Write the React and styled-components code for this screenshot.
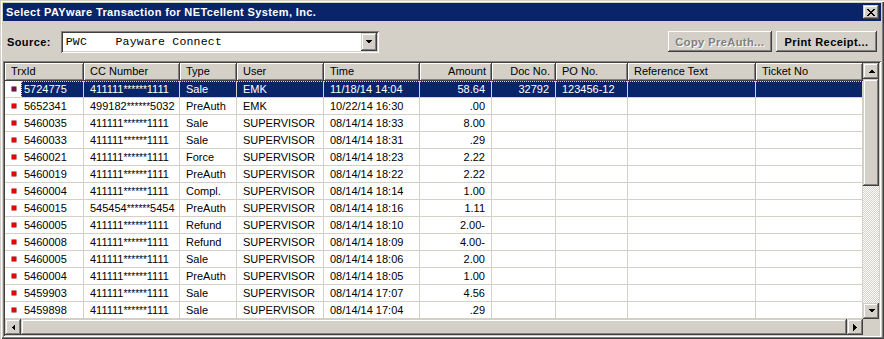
import React from 'react';
import styled, { createGlobalStyle } from 'styled-components';

const FACE = '#d4d0c8';
const NAVY = '#0a246a';

const GlobalStyle = createGlobalStyle`
  html, body {
    margin: 0;
    padding: 0;
    background: ${FACE};
  }
  body {
    font-family: "Liberation Sans", Arial, sans-serif;
    font-size: 11px;
    color: #000;
  }
  * {
    box-sizing: border-box;
  }
`;

const raised = `inset -1px -1px #404040, inset 1px 1px #ffffff, inset -2px -2px #808080, inset 2px 2px ${FACE}`;
const raisedScroll = `inset -1px -1px #404040, inset 1px 1px ${FACE}, inset -2px -2px #808080, inset 2px 2px #ffffff`;
const sunken = `inset 1px 1px #808080, inset -1px -1px #ffffff, inset 2px 2px #404040, inset -2px -2px ${FACE}`;

const Window = styled.div`
  width: 884px;
  height: 339px;
  padding: 3px 3px 2px 3px;
  display: flex;
  flex-direction: column;
  background: ${FACE};
  box-shadow: inset 1px 1px ${FACE}, inset 2px 2px #ffffff, inset -1px -1px #404040,
    inset -2px -2px #808080;
`;

const TitleBar = styled.div`
  height: 18px;
  background: ${NAVY};
  display: flex;
  align-items: center;
  padding: 0 2px 0 3px;
`;

const Title = styled.div`
  color: #fff;
  font-weight: bold;
  font-size: 11px;
  letter-spacing: 0.37px;
  white-space: nowrap;
`;

const CloseButton = styled.div`
  margin-left: auto;
  width: 16px;
  height: 14px;
  background: ${FACE};
  box-shadow: ${raisedScroll};
  display: flex;
  align-items: center;
  justify-content: center;
`;

const Toolbar = styled.div`
  height: 40px;
  display: flex;
  align-items: center;
  padding: 1px 4px 0 4px;
`;

const Label = styled.span`
  font-weight: bold;
  letter-spacing: 0.4px;
  margin-right: 10px;
`;

const Combo = styled.div`
  width: 318px;
  height: 22px;
  background: #fff;
  box-shadow: ${sunken};
  padding: 2px;
  display: flex;
  align-items: center;
`;

const ComboText = styled.div`
  flex: 1;
  font-family: "Liberation Mono", "Courier New", monospace;
  font-size: 11.5px;
  letter-spacing: 0.2px;
  white-space: pre;
  padding-left: 3px;
`;

const DropButton = styled.div`
  width: 16px;
  height: 18px;
  background: ${FACE};
  box-shadow: ${raisedScroll};
  display: flex;
  align-items: center;
  justify-content: center;
`;

const Buttons = styled.div`
  margin-left: auto;
  display: flex;
  gap: 4px;
`;

const Button = styled.div`
  width: ${p => p.$width}px;
  height: 21px;
  background: ${FACE};
  box-shadow: ${raised};
  font-weight: bold;
  letter-spacing: 0.45px;
  display: flex;
  align-items: center;
  justify-content: center;
  color: ${p => (p.$disabled ? '#808080' : '#000')};
  text-shadow: ${p => (p.$disabled ? '1px 1px #ffffff' : 'none')};
`;

const ListFrame = styled.div`
  flex: 1;
  padding: 2px;
  box-shadow: ${sunken};
  display: grid;
  grid-template-columns: 1fr 16px;
  grid-template-rows: 1fr 16px;
  min-height: 0;
`;

const ListMain = styled.div`
  background: #fff;
  overflow: hidden;
`;

const COLS = '79px 96px 57px 87px 96px 72px 64px 72px 128px 1fr';

const HeaderRow = styled.div`
  display: grid;
  grid-template-columns: ${COLS};
  height: 18px;
`;

const HeaderCell = styled.div`
  background: ${FACE};
  box-shadow: inset -1px -1px #404040, inset 1px 1px #ffffff, inset -2px -2px #808080;
  padding: 0 6px;
  line-height: 17px;
  text-align: ${p => p.$align || 'left'};
  white-space: nowrap;
  overflow: hidden;
`;

const Row = styled.div`
  display: grid;
  grid-template-columns: ${COLS};
  height: 17px;
  border-bottom: 1px solid ${FACE};
`;

const focusLine = `repeating-linear-gradient(90deg, #e8d890 0 1px, transparent 1px 2px)`;

const Cell = styled.div`
  border-right: 1px solid ${FACE};
  padding: 0 6px;
  line-height: 16px;
  white-space: nowrap;
  overflow: hidden;
  text-align: ${p => p.$align || 'left'};
  background-color: ${p => (p.$selected ? NAVY : 'transparent')};
  background-image: ${p => (p.$selected ? focusLine : 'none')};
  background-size: 100% 1px;
  background-repeat: no-repeat;
  color: ${p => (p.$selected ? '#fff' : '#000')};
`;

const IdCell = styled.div`
  border-right: 1px solid ${FACE};
  display: flex;
  align-items: center;
  padding-left: 7px;
  white-space: nowrap;
  overflow: hidden;
`;

const RowIcon = styled.span`
  width: 4px;
  height: 4px;
  flex: none;
  background: ${p => (p.$selected ? '#7a1040' : '#ee0000')};
  box-shadow: 0 0 0 0.5px ${p => (p.$selected ? '#3a0830' : '#a00000')};
  margin-right: 6px;
`;

const IdLabel = styled.span`
  flex: 1;
  align-self: stretch;
  line-height: 16px;
  padding-left: 2px;
  background-color: ${p => (p.$selected ? NAVY : 'transparent')};
  background-image: ${p => (p.$selected ? focusLine : 'none')};
  background-size: 100% 1px;
  background-repeat: no-repeat;
  color: ${p => (p.$selected ? '#fff' : '#000')};
  border-left: ${p => (p.$selected ? '1px dotted #e8d890' : 'none')};
  margin-left: ${p => (p.$selected ? '-1px' : '0')};
`;

const Stars = styled.span`
  font-size: 10px;
`;

const VScroll = styled.div`
  display: flex;
  flex-direction: column;
  background: repeating-conic-gradient(${FACE} 0 25%, #ffffff 0 50%) 0 0 / 2px 2px;
`;

const HScroll = styled.div`
  display: flex;
  background: ${FACE};
`;

const ScrollButton = styled.div`
  width: 16px;
  height: 16px;
  flex: none;
  background: ${FACE};
  box-shadow: ${raisedScroll};
  display: flex;
  align-items: center;
  justify-content: center;
`;

const Thumb = styled.div`
  background: ${FACE};
  box-shadow: ${raisedScroll};
  flex: ${p => (p.$size ? 'none' : '1')};
  height: ${p => (p.$size ? `${p.$size}px` : 'auto')};
`;

const Track = styled.div`
  flex: 1;
`;

const Corner = styled.div`
  background: ${FACE};
`;

const Arrow = ({ dir }) => {
  const pts = {
    up: '0,4 7,4 3.5,0.5',
    down: '0,0 7,0 3.5,3.5',
    left: '4,0 4,7 0.5,3.5',
    right: '0,0 0,7 3.5,3.5',
  }[dir];
  const vertical = dir === 'up' || dir === 'down';
  return (
    <svg width={vertical ? 7 : 4} height={vertical ? 4 : 7} viewBox={vertical ? '0 0 7 4' : '0 0 4 7'}>
      <polygon points={pts} fill="#000" shapeRendering="crispEdges" />
    </svg>
  );
};

const CloseGlyph = () => (
  <svg width="8" height="7" viewBox="0 0 8 7">
    <path d="M0 0h2l2 2.5L6 0h2L5 3.5 8 7H6L4 4.5 2 7H0l3-3.5z" fill="#000" shapeRendering="crispEdges" />
  </svg>
);

const columns = [
  { key: 'id', title: 'TrxId' },
  { key: 'cc', title: 'CC Number' },
  { key: 'type', title: 'Type' },
  { key: 'user', title: 'User' },
  { key: 'time', title: 'Time' },
  { key: 'amount', title: 'Amount', align: 'right' },
  { key: 'doc', title: 'Doc No.', align: 'right' },
  { key: 'po', title: 'PO No.' },
  { key: 'ref', title: 'Reference Text' },
  { key: 'ticket', title: 'Ticket No' },
];

const rows = [
  ['5724775', ['411111', '1111'], 'Sale', 'EMK', '11/18/14 14:04', '58.64', '32792', '123456-12'],
  ['5652341', ['499182', '5032'], 'PreAuth', 'EMK', '10/22/14 16:30', '.00'],
  ['5460035', ['411111', '1111'], 'Sale', 'SUPERVISOR', '08/14/14 18:33', '8.00'],
  ['5460033', ['411111', '1111'], 'Sale', 'SUPERVISOR', '08/14/14 18:31', '.29'],
  ['5460021', ['411111', '1111'], 'Force', 'SUPERVISOR', '08/14/14 18:23', '2.22'],
  ['5460019', ['411111', '1111'], 'PreAuth', 'SUPERVISOR', '08/14/14 18:22', '2.22'],
  ['5460004', ['411111', '1111'], 'Compl.', 'SUPERVISOR', '08/14/14 18:14', '1.00'],
  ['5460015', ['545454', '5454'], 'PreAuth', 'SUPERVISOR', '08/14/14 18:16', '1.11'],
  ['5460005', ['411111', '1111'], 'Refund', 'SUPERVISOR', '08/14/14 18:10', '2.00-'],
  ['5460008', ['411111', '1111'], 'Refund', 'SUPERVISOR', '08/14/14 18:09', '4.00-'],
  ['5460005', ['411111', '1111'], 'Sale', 'SUPERVISOR', '08/14/14 18:06', '2.00'],
  ['5460004', ['411111', '1111'], 'PreAuth', 'SUPERVISOR', '08/14/14 18:05', '1.00'],
  ['5459903', ['411111', '1111'], 'Sale', 'SUPERVISOR', '08/14/14 17:07', '4.56'],
  ['5459898', ['411111', '1111'], 'Sale', 'SUPERVISOR', '08/14/14 17:04', '.29'],
];

export default function App() {
  return (
    <>
      <GlobalStyle />
      <Window>
        <TitleBar>
          <Title>Select PAYware Transaction for NETcellent System, Inc.</Title>
          <CloseButton>
            <CloseGlyph />
          </CloseButton>
        </TitleBar>

        <Toolbar>
          <Label>Source:</Label>
          <Combo>
            <ComboText>{'PWC    Payware Connect'}</ComboText>
            <DropButton>
              <Arrow dir="down" />
            </DropButton>
          </Combo>
          <Buttons>
            <Button $width={104} $disabled>
              Copy PreAuth...
            </Button>
            <Button $width={101}>Print Receipt...</Button>
          </Buttons>
        </Toolbar>

        <ListFrame>
          <ListMain>
            <HeaderRow>
              {columns.map(col => (
                <HeaderCell key={col.key} $align={col.align}>
                  {col.title}
                </HeaderCell>
              ))}
            </HeaderRow>
            {rows.map((r, i) => {
              const sel = i === 0;
              const [id, cc, ...rest] = r;
              return (
                <Row key={i}>
                  <IdCell>
                    <RowIcon $selected={sel} />
                    <IdLabel $selected={sel}>{id}</IdLabel>
                  </IdCell>
                  <Cell $selected={sel}>
                    {cc[0]}
                    <Stars>******</Stars>
                    {cc[1]}
                  </Cell>
                  {columns.slice(2).map((col, j) => (
                    <Cell key={col.key} $align={col.align} $selected={sel}>
                      {rest[j] || ''}
                    </Cell>
                  ))}
                </Row>
              );
            })}
          </ListMain>
          <VScroll>
            <ScrollButton>
              <Arrow dir="up" />
            </ScrollButton>
            <Thumb $size={107} />
            <Track />
            <ScrollButton>
              <Arrow dir="down" />
            </ScrollButton>
          </VScroll>
          <HScroll>
            <ScrollButton>
              <Arrow dir="left" />
            </ScrollButton>
            <Thumb />
            <ScrollButton>
              <Arrow dir="right" />
            </ScrollButton>
          </HScroll>
          <Corner />
        </ListFrame>
      </Window>
    </>
  );
}
